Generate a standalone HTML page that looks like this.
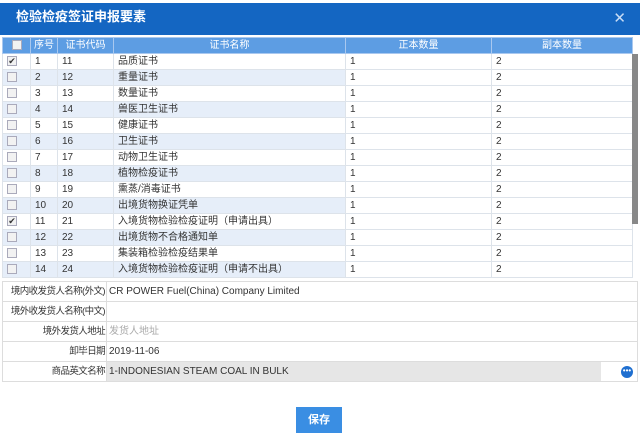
<!DOCTYPE html><html><head><meta charset="utf-8"><style>
*{margin:0;padding:0;box-sizing:border-box}
body{width:640px;height:442px;background:#fff;font-family:"Liberation Sans","Noto Sans CJK SC",sans-serif;font-size:10px;color:#333;position:relative;overflow:hidden}
.title{position:absolute;left:0;top:3px;width:640px;height:32px;background:#1466c2;color:#fff;font-size:13px;font-weight:bold;padding:0 0 0 16px;line-height:28px}
.x{position:absolute;right:14px;top:2px;font-size:15px;font-weight:normal;color:#c8dcf5}
table{border-collapse:collapse;position:absolute;left:2px;top:37px;table-layout:fixed}
td,th{height:16px;line-height:14px;border:1px solid #dde3ea;padding:0 0 0 4px;white-space:nowrap;overflow:hidden;font-weight:normal;vertical-align:middle}
th{background:#5d9de3;color:#fff;text-align:center;border-color:#a9c8ef;padding:0}
tr.e td.t{background:#e6eef9}
.cb{display:inline-block;width:10px;height:10px;border:1px solid #aab;background:#f2f2f2;vertical-align:middle;font-size:9px;line-height:8px;text-align:center;color:#333}
.sb{position:absolute;left:632px;top:54px;width:6px;height:170px;background:#888}
.form{position:absolute;left:2px;top:281px;width:636px;border-top:1px solid #ddd}
.r{height:20px;border-bottom:1px solid #ddd;border-left:1px solid #ddd;border-right:1px solid #ddd;display:flex;align-items:center;font-size:10px;position:relative}
.l{width:104px;text-align:right;padding-right:1px;border-right:1px solid #ddd;height:100%;line-height:19px;white-space:nowrap;letter-spacing:-0.6px;font-size:9.5px}
.v{padding-left:2px;flex:1;height:100%;line-height:19px}
.btn{position:absolute;left:296px;top:407px;width:46px;height:26px;background:#3a8ee3;color:#fff;font-size:11px;font-weight:bold;text-align:center;line-height:26px}
</style></head><body>
<div class="title">检验检疫签证申报要素<span class="x">✕</span></div>
<table>
<colgroup><col style="width:28px"><col style="width:27px"><col style="width:56px"><col style="width:232px"><col style="width:146px"><col style="width:141px"></colgroup>
<tr><th><span class="cb"></span></th><th>序号</th><th>证书代码</th><th>证书名称</th><th>正本数量</th><th>副本数量</th></tr>
<tr><td class="t"><span class="cb">✔</span></td><td class="t">1</td><td class="t">11</td><td class="t">品质证书</td><td>1</td><td>2</td></tr>
<tr class="e"><td class="t"><span class="cb"></span></td><td class="t">2</td><td class="t">12</td><td class="t">重量证书</td><td>1</td><td>2</td></tr>
<tr><td class="t"><span class="cb"></span></td><td class="t">3</td><td class="t">13</td><td class="t">数量证书</td><td>1</td><td>2</td></tr>
<tr class="e"><td class="t"><span class="cb"></span></td><td class="t">4</td><td class="t">14</td><td class="t">兽医卫生证书</td><td>1</td><td>2</td></tr>
<tr><td class="t"><span class="cb"></span></td><td class="t">5</td><td class="t">15</td><td class="t">健康证书</td><td>1</td><td>2</td></tr>
<tr class="e"><td class="t"><span class="cb"></span></td><td class="t">6</td><td class="t">16</td><td class="t">卫生证书</td><td>1</td><td>2</td></tr>
<tr><td class="t"><span class="cb"></span></td><td class="t">7</td><td class="t">17</td><td class="t">动物卫生证书</td><td>1</td><td>2</td></tr>
<tr class="e"><td class="t"><span class="cb"></span></td><td class="t">8</td><td class="t">18</td><td class="t">植物检疫证书</td><td>1</td><td>2</td></tr>
<tr><td class="t"><span class="cb"></span></td><td class="t">9</td><td class="t">19</td><td class="t">熏蒸/消毒证书</td><td>1</td><td>2</td></tr>
<tr class="e"><td class="t"><span class="cb"></span></td><td class="t">10</td><td class="t">20</td><td class="t">出境货物换证凭单</td><td>1</td><td>2</td></tr>
<tr><td class="t"><span class="cb">✔</span></td><td class="t">11</td><td class="t">21</td><td class="t">入境货物检验检疫证明（申请出具）</td><td>1</td><td>2</td></tr>
<tr class="e"><td class="t"><span class="cb"></span></td><td class="t">12</td><td class="t">22</td><td class="t">出境货物不合格通知单</td><td>1</td><td>2</td></tr>
<tr><td class="t"><span class="cb"></span></td><td class="t">13</td><td class="t">23</td><td class="t">集装箱检验检疫结果单</td><td>1</td><td>2</td></tr>
<tr class="e"><td class="t"><span class="cb"></span></td><td class="t">14</td><td class="t">24</td><td class="t">入境货物检验检疫证明（申请不出具）</td><td>1</td><td>2</td></tr>
</table>
<div class="sb"></div>
<div class="form">
<div class="r"><div class="l">境内收发货人名称(外文)</div><div class="v">CR POWER Fuel(China) Company Limited</div></div>
<div class="r"><div class="l">境外收发货人名称(中文)</div><div class="v"></div></div>
<div class="r"><div class="l">境外发货人地址</div><div class="v" style="color:#aaa">发货人地址</div></div>
<div class="r"><div class="l">卸毕日期</div><div class="v">2019-11-06</div></div>
<div class="r"><div class="l">商品英文名称</div><div class="v" style="background:#e6e6e6;margin-right:36px">1-INDONESIAN STEAM COAL IN BULK</div><div style="position:absolute;right:4px;top:4px;width:12px;height:12px;border-radius:6px;background:#1f6fd0;color:#fff;font-size:8px;line-height:9px;text-align:center">•••</div></div>
</div>
<div class="btn">保存</div>
</body></html>
